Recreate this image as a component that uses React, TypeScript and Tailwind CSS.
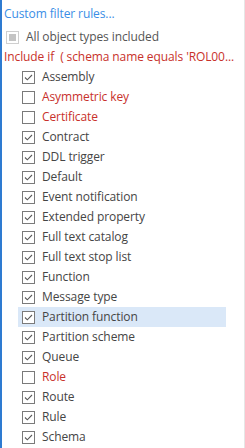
import React from "react";

const items: { label: string; checked: boolean; red?: boolean; selected?: boolean }[] = [
  { label: "Assembly", checked: true },
  { label: "Asymmetric key", checked: false, red: true },
  { label: "Certificate", checked: false, red: true },
  { label: "Contract", checked: true },
  { label: "DDL trigger", checked: true },
  { label: "Default", checked: true },
  { label: "Event notification", checked: true },
  { label: "Extended property", checked: true },
  { label: "Full text catalog", checked: true },
  { label: "Full text stop list", checked: true },
  { label: "Function", checked: true },
  { label: "Message type", checked: true },
  { label: "Partition function", checked: true, selected: true },
  { label: "Partition scheme", checked: true },
  { label: "Queue", checked: true },
  { label: "Role", checked: false, red: true },
  { label: "Route", checked: true },
  { label: "Rule", checked: true },
  { label: "Schema", checked: true },
];

function Box({ checked }: { checked: boolean }) {
  return (
    <div className="w-[13px] h-[13px] border border-[#7a7a7a] bg-white flex items-center justify-center shrink-0">
      {checked && (
        <svg width="11" height="11" viewBox="0 0 11 11">
          <path d="M2 5.5 L4.3 7.8 L9 3" fill="none" stroke="#5a5a5a" strokeWidth="1.1" />
        </svg>
      )}
    </div>
  );
}

export default function App() {
  return (
    <div
      className="w-[245px] h-[448px] bg-white border-l-2 border-l-[#2e7bd1] border-r border-r-[#e6e6e6] overflow-hidden text-[12px] leading-[20px] tracking-[-0.1px]"
      style={{ fontFamily: '"Open Sans", "Noto Sans", sans-serif' }}
    >
      <div className="pl-[2px] pt-[4px] text-[#3a8ee6]">Custom filter rules...</div>
      <div className="flex items-center pl-[4px] mt-[3px] h-[20px]">
        <div className="w-[13px] h-[13px] border border-[#cfcfcf] flex items-center justify-center">
          <div className="w-[7px] h-[7px] bg-[#c4c4c4]" />
        </div>
        <span className="ml-[7px] text-[#555]">All object types included</span>
      </div>
      <div className="pl-[2px] text-[#c8312b] whitespace-nowrap">Include if&nbsp; ( schema name equals 'ROL00...</div>
      <div className="flex flex-col">
        {items.map((it) => (
          <div
            key={it.label}
            className={`flex items-center h-[20px] ml-[16px] w-[208px] pl-[4px] ${it.selected ? "bg-[#dae8f8]" : ""}`}
          >
            <Box checked={it.checked} />
            <span className={`ml-[7px] whitespace-nowrap ${it.red ? "text-[#c8312b]" : "text-[#454545]"}`}>{it.label}</span>
          </div>
        ))}
      </div>
    </div>
  );
}
